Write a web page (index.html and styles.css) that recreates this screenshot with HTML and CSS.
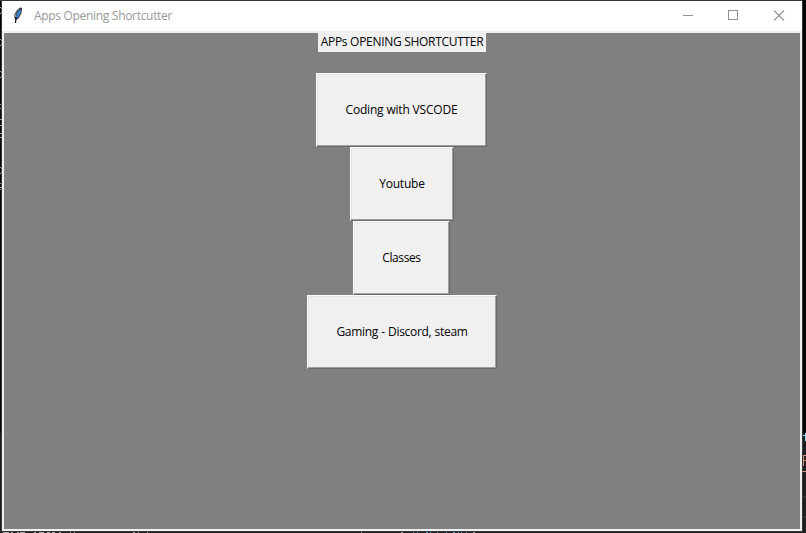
FILE: index.html
```html
<!DOCTYPE html>
<html lang="en">
<head>
<meta charset="utf-8">
<title>Apps Opening Shortcutter</title>
<link rel="stylesheet" href="styles.css">
</head>
<body>
<svg class="backdrop" width="806" height="533" shape-rendering="crispEdges" aria-hidden="true">
  <rect width="806" height="533" fill="#050508"/>
  <rect y="433" width="806" height="100" fill="#1e1f21"/>
  <path d="M0 .5H803M1.500 0V533M0 531.500H803M802.500 0V533" stroke="#343438"/>
  <path d="M0 7.500H1M1.500 8V9M1.500 12V13M0 13.500H1M0 39.500H1M1.500 40V41M1.500 44V45M0 45.500H1M0 71.500H1M1.500 72V73M1.500 76V77M0 77.500H1M0 104.500H1M0 108.500H1M0 119.500H2M0 125.500H2M0 133.500H2M0 137.500H2M0 167.500H1M1.500 168V169M1.500 172V173M0 173.500H1M0 183.500H1M0 187.500H2M0 189.500H1" stroke="#a0a0a0"/>
  <path d="M3 532.500H9M11 532.500H13M17 532.500H19M20 532.500H25M34 532.500H36M39 532.500H44M47 532.500H50M52 532.500H55M59 532.500H61M70 532.500H71M74 532.500H75M133 532.500H135M138 532.500H139M147 532.500H148M361 532.500H362M401 532.500H403M473 532.500H475" stroke="#aaa"/>
  <path d="M413 532.500H414M417 532.500H418M426 532.500H428M430 532.500H431M437 532.500H438M446 532.500H447M453 532.500H455M458 532.500H459M461 532.500H462M466 532.500H467" stroke="#5aa0d0"/>
  <path d="M803 435.500H806M805.500 433V441" stroke="#9cdcfe"/>
  <path d="M803.500 455V466M803 455.500H806M803 460.500H806M802 471.500H806" stroke="#ce9178"/>
  <path d="M803 497H806M803 517H806" stroke="#303134" stroke-width="2"/>
</svg>
<main class="window">
  <header class="titlebar">
    <svg class="feather" width="10" height="17" viewBox="0 0 10 17">
      <path d="M7 .5 9 1 8.500 6 5.500 11.500 3 13 1.500 11 1.500 7 4 3Z" fill="#1c2733"/>
      <path d="M8 2 7.500 6 4.500 11 3 10.500 4 6Z" fill="#4f98e8"/>
      <path d="M6.500 1.500 3 5.500 2.200 10" fill="none" stroke="#98a7b0" stroke-width=".9"/>
      <path d="M5.500 5 3.300 11" fill="none" stroke="#234c80" stroke-width=".6"/>
      <path d="M3 11 2.500 16" fill="none" stroke="#080808" stroke-width="1.200"/>
    </svg>
    <h1 class="title">Apps Opening Shortcutter</h1>
    <svg class="controls" width="102" height="11" viewBox="0 0 102 11" fill="none" stroke="#929292">
      <path d="M0 5.500H10M45.500 .5H54.500V9.500H45.500Z" shape-rendering="crispEdges"/>
      <path d="M91 .5 101 10.500M101 .5 91 10.500" stroke-width="1.100"/>
    </svg>
  </header>
  <section class="client">
    <p class="label">APPs OPENING SHORTCUTTER</p>
    <button class="button coding">Coding with VSCODE</button>
    <button class="button youtube">Youtube</button>
    <button class="button classes">Classes</button>
    <button class="button gaming">Gaming - Discord, steam</button>
  </section>
</main>
</body>
</html>
```
FILE: styles.css
```css
* { box-sizing: border-box; }
body {
  margin: 0;
  width: 806px;
  height: 533px;
  overflow: hidden;
  padding: 1px 4px 2px 2px;
  font: 12px/16px "Open Sans", sans-serif;
}
.backdrop { position: absolute; left: 0; top: 0; z-index: -1; }
.window {
  width: 800px;
  height: 530px;
  display: flex;
  flex-direction: column;
  background: #fff;
}
.titlebar {
  height: 30px;
  display: flex;
  align-items: flex-start;
  padding: 6px 17px 0 11px;
}
.title {
  margin: 1px auto 0 11px;
  font-size: 12px;
  font-weight: 400;
  color: #999;
  white-space: nowrap;
  letter-spacing: -0.31px;
}
.controls { margin: 3px 0 0; }
.client {
  flex: 1;
  display: flex;
  flex-direction: column;
  align-items: flex-start;
  border: 2px solid #f0f0f0;
  background: #808080;
}
.label {
  width: 168px;
  height: 19px;
  margin: 0 0 21px 314px;
  background: #f0f0f0;
  color: #000;
  text-align: center;
  line-height: 18px;
  white-space: nowrap;
  letter-spacing: -0.3px;
}
.button {
  height: 74px;
  padding: 0;
  border: 1px solid;
  border-color: #fff #696969 #696969 #fff;
  border-radius: 0;
  box-shadow: inset -1px -1px #a0a0a0, inset 1px 1px #e3e3e3;
  background: #f0f0f0;
  color: #000;
  font: inherit;
  white-space: nowrap;
}
.coding { width: 171px; margin-left: 312px; letter-spacing: -0.18px; }
.youtube { width: 104px; margin-left: 346px; letter-spacing: -0.2px; }
.classes { width: 97px; margin-left: 349px; letter-spacing: -0.4px; }
.gaming { width: 190px; margin-left: 303px; letter-spacing: -0.3px; word-spacing: 0.4px; }
```
